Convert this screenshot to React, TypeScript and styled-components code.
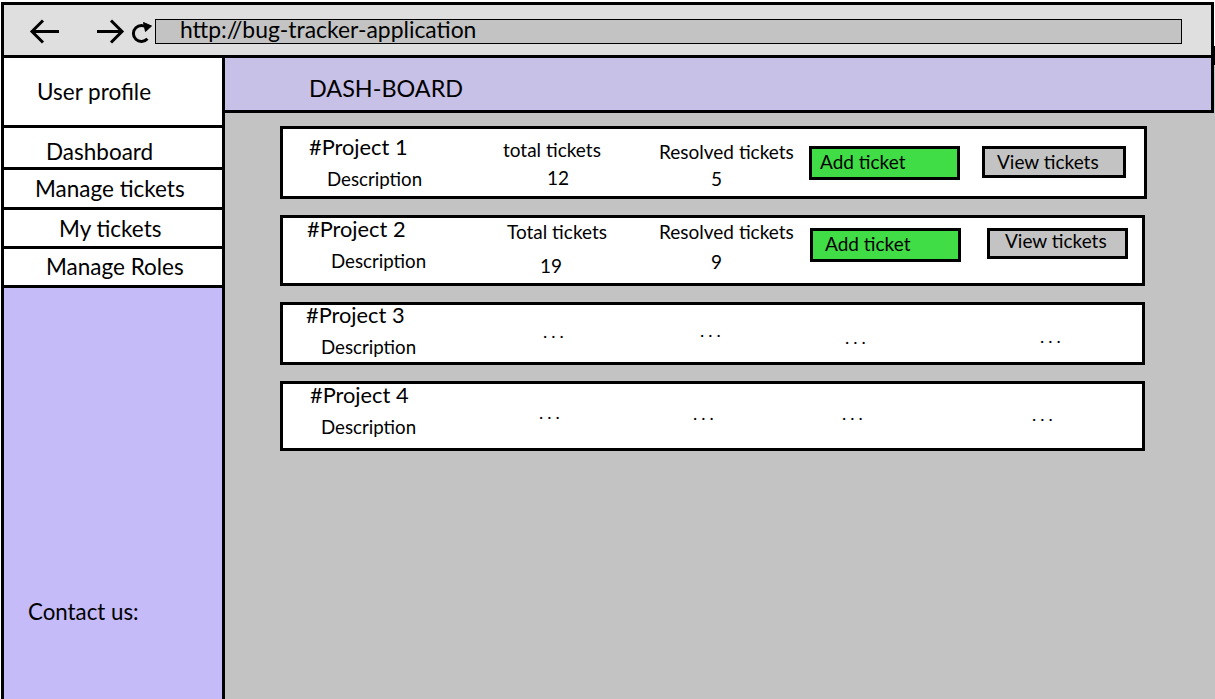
import React from 'react';
import styled, { createGlobalStyle } from 'styled-components';

const GlobalStyle = createGlobalStyle`
  html, body { margin: 0; padding: 0; background: #ffffff; }
  body { font-family: Lato, "Liberation Sans", sans-serif; color: #000; }
  * { box-sizing: border-box; }
`;

const Frame = styled.div`
  position: relative;
  width: 1215px;
  height: 699px;
  padding: 2px 0 0 1px;
  display: flex;
  flex-direction: column;
  overflow: hidden;
  background: #ffffff;
`;

const TopBar = styled.header`
  flex: none;
  width: 1213px;
  height: 56px;
  background: #dfdfdf;
  border: 3px solid #000;
  display: flex;
  align-items: flex-start;
  padding: 14px 0 0 25px;
`;

const NavIcon = styled.svg<{ $ml?: number }>`
  flex: none;
  margin-left: ${(p) => p.$ml ?? 0}px;
  display: block;
`;

const AddressBar = styled.div`
  flex: none;
  width: 1027px;
  height: 25px;
  margin-left: 2px;
  background: #c3c3c3;
  border: 1px solid #000;
  padding-left: 24px;
`;

const AddressText = styled.div`
  margin-top: -1px;
  font-size: 22.9px;
  line-height: 20px;
  white-space: nowrap;
`;

const Notch = styled.div`
  position: absolute;
  left: 1211px;
  top: 46px;
  width: 4px;
  height: 19px;
  background: #000;
`;

const Body = styled.div`
  flex: 1;
  display: flex;
  min-height: 0;
`;

const Sidebar = styled.nav`
  flex: none;
  width: 224px;
  border-left: 3px solid #000;
  border-right: 3px solid #000;
  display: flex;
  flex-direction: column;
`;

const NavItem = styled.div<{ $h: number; $x: number; $dy?: number }>`
  flex: none;
  height: ${(p) => p.$h}px;
  background: #ffffff;
  border-bottom: 3px solid #000;
  display: flex;
  align-items: center;
  padding-left: ${(p) => p.$x}px;
  padding-top: ${(p) => (p.$dy ?? 0) * 2}px;
  font-size: 22.5px;
  line-height: 26px;
  white-space: nowrap;
`;

const ContactBox = styled.div`
  flex: 1;
  background: #c5bbf9;
  padding: 311px 0 0 24px;
  font-size: 22.3px;
  line-height: 26px;
`;

const Main = styled.main`
  flex: 1;
  background: #c3c3c3;
  display: flex;
  flex-direction: column;
`;

const Header = styled.div`
  flex: none;
  height: 55px;
  margin-right: 1px;
  background: #c7c1e7;
  border-right: 3px solid #000;
  border-bottom: 3px solid #000;
  display: flex;
  align-items: center;
  padding: 7px 0 0 84px;
  font-size: 23.4px;
  line-height: 26px;
`;

const ProjectList = styled.section`
  display: flex;
  flex-direction: column;
  gap: 16px;
  padding: 13px 0 0 55px;
`;

const Card = styled.article<{ $h: number; $w: number }>`
  flex: none;
  width: ${(p) => p.$w}px;
  height: ${(p) => p.$h}px;
  background: #ffffff;
  border: 3px solid #000;
  display: flex;
  align-items: flex-start;
`;

const TitleCol = styled.div<{ $top: number }>`
  flex: none;
  width: 206px;
  display: flex;
  flex-direction: column;
  align-items: flex-start;
  margin-top: ${(p) => p.$top}px;
`;

const ProjectTitle = styled.div<{ $x: number }>`
  margin-left: ${(p) => p.$x}px;
  font-size: 21.8px;
  line-height: 22px;
  white-space: nowrap;
`;

const Description = styled.div<{ $x: number }>`
  margin-left: ${(p) => p.$x}px;
  margin-top: 10px;
  font-size: 18.7px;
  line-height: 22px;
  white-space: nowrap;
`;

const StatCol = styled.div<{ $w: number; $top: number }>`
  flex: none;
  width: ${(p) => p.$w}px;
  margin-top: ${(p) => p.$top}px;
  display: flex;
  flex-direction: column;
  align-items: flex-start;
`;

const StatLabel = styled.div<{ $x: number }>`
  margin-left: ${(p) => p.$x}px;
  font-size: 19px;
  line-height: 22px;
  white-space: nowrap;
`;

const StatValue = styled.div<{ $x: number; $gap: number }>`
  margin-left: ${(p) => p.$x}px;
  margin-top: ${(p) => p.$gap}px;
  font-size: 19px;
  line-height: 22px;
`;

const ActionButton = styled.button<{
  $variant: 'add' | 'view';
  $w: number;
  $h: number;
  $ml: number;
  $top: number;
  $px: number;
  $dy: number;
}>`
  flex: none;
  width: ${(p) => p.$w}px;
  height: ${(p) => p.$h}px;
  margin: ${(p) => p.$top}px 0 0 ${(p) => p.$ml}px;
  background: ${(p) => (p.$variant === 'add' ? '#41dd47' : '#c3c3c3')};
  border: 3px solid #000;
  border-radius: 0;
  display: flex;
  align-items: center;
  padding: 0 0 ${(p) => p.$dy}px ${(p) => p.$px}px;
  font-family: Lato, "Liberation Sans", sans-serif;
  font-size: 19px;
  line-height: 22px;
  color: #000;
  white-space: nowrap;
  cursor: pointer;
`;

const DotCell = styled.div<{ $ml: number; $top: number }>`
  flex: none;
  width: 24px;
  margin: ${(p) => p.$top}px 0 0 ${(p) => p.$ml}px;
  font-size: 18px;
  line-height: 20px;
  letter-spacing: 4px;
  white-space: nowrap;
`;

type Stat = { label: string; value: string; w: number; lx: number; vx: number; top: number; gap: number };
type Btn = { w: number; h: number; ml: number; top: number; px: number; dy: number };
type Dot = { ml: number; top: number };

type Project = {
  name: string;
  h: number;
  w: number;
  top: number;
  tx: number;
  dx: number;
  stats?: Stat[];
  add?: Btn;
  view?: Btn;
  dots?: Dot[];
};

const projects: Project[] = [
  {
    name: '#Project 1',
    h: 73,
    w: 867,
    top: 7,
    tx: 26,
    dx: 44,
    stats: [
      { label: 'total tickets', value: '12', w: 170, lx: 14, vx: 58, top: 10, gap: 6 },
      { label: 'Resolved tickets', value: '5', w: 150, lx: 0, vx: 52, top: 12, gap: 5 },
    ],
    add: { w: 151, h: 34, ml: 0, top: 17, px: 8, dy: 3 },
    view: { w: 144, h: 32, ml: 22, top: 17, px: 12, dy: 0 },
  },
  {
    name: '#Project 2',
    h: 71,
    w: 865,
    top: 0,
    tx: 24,
    dx: 48,
    stats: [
      { label: 'Total tickets', value: '19', w: 170, lx: 18, vx: 51, top: 3, gap: 12 },
      { label: 'Resolved tickets', value: '9', w: 150, lx: 0, vx: 52, top: 3, gap: 8 },
    ],
    add: { w: 151, h: 34, ml: 1, top: 10, px: 12, dy: 3 },
    view: { w: 141, h: 31, ml: 26, top: 10, px: 15, dy: 6 },
  },
  {
    name: '#Project 3',
    h: 63,
    w: 865,
    top: -1,
    tx: 23,
    dx: 38,
    dots: [
      { ml: 54, top: 16 },
      { ml: 133, top: 15 },
      { ml: 121, top: 22 },
      { ml: 171, top: 21 },
    ],
  },
  {
    name: '#Project 4',
    h: 70,
    w: 865,
    top: 0,
    tx: 27,
    dx: 38,
    dots: [
      { ml: 50, top: 18 },
      { ml: 130, top: 19 },
      { ml: 125, top: 19 },
      { ml: 166, top: 20 },
    ],
  },
];

const navItems = [
  { label: 'Dashboard', h: 42, x: 42, dy: 4 },
  { label: 'Manage tickets', h: 40, x: 31, dy: 0 },
  { label: 'My tickets', h: 39, x: 55, dy: 1 },
  { label: 'Manage Roles', h: 39, x: 42, dy: 0 },
];

const BackArrow = () => (
  <NavIcon width={30} height={25} viewBox="0 0 30 25" fill="none" stroke="#000" strokeWidth={3}>
    <path d="M30 12.5H3" />
    <path d="M14 1.5L3 12.5L14 23.5" />
  </NavIcon>
);

const ForwardArrow = () => (
  <NavIcon $ml={38} width={28} height={25} viewBox="0 0 28 25" fill="none" stroke="#000" strokeWidth={3}>
    <path d="M0 12.5H25" />
    <path d="M14 1.5L25 12.5L14 23.5" />
  </NavIcon>
);

const ReloadIcon = () => (
  <NavIcon $ml={6} width={22} height={25} viewBox="0 0 22 25" fill="none" stroke="#000">
    <path d="M16.4 9.2 A8 8 0 1 0 16.4 19.8" strokeWidth={3} />
    <path d="M12.5 3.5 L20.5 7 L14.5 12.5 Z" fill="#000" strokeWidth={1} />
  </NavIcon>
);

export default function App() {
  return (
    <>
      <GlobalStyle />
      <Frame>
        <TopBar>
          <BackArrow />
          <ForwardArrow />
          <ReloadIcon />
          <AddressBar>
            <AddressText>http://bug-tracker-application</AddressText>
          </AddressBar>
        </TopBar>
        <Notch />
        <Body>
          <Sidebar>
            <NavItem $h={70} $x={33}>User profile</NavItem>
            {navItems.map((n) => (
              <NavItem key={n.label} $h={n.h} $x={n.x} $dy={n.dy}>
                {n.label}
              </NavItem>
            ))}
            <ContactBox>Contact us:</ContactBox>
          </Sidebar>
          <Main>
            <Header>DASH-BOARD</Header>
            <ProjectList>
              {projects.map((p) => (
                <Card key={p.name} $h={p.h} $w={p.w}>
                  <TitleCol $top={p.top}>
                    <ProjectTitle $x={p.tx}>{p.name}</ProjectTitle>
                    <Description $x={p.dx}>Description</Description>
                  </TitleCol>
                  {p.stats?.map((s) => (
                    <StatCol key={s.label} $w={s.w} $top={s.top}>
                      <StatLabel $x={s.lx}>{s.label}</StatLabel>
                      <StatValue $x={s.vx} $gap={s.gap}>{s.value}</StatValue>
                    </StatCol>
                  ))}
                  {p.add && (
                    <ActionButton $variant="add" $w={p.add.w} $h={p.add.h} $ml={p.add.ml} $top={p.add.top} $px={p.add.px} $dy={p.add.dy}>
                      Add ticket
                    </ActionButton>
                  )}
                  {p.view && (
                    <ActionButton $variant="view" $w={p.view.w} $h={p.view.h} $ml={p.view.ml} $top={p.view.top} $px={p.view.px} $dy={p.view.dy}>
                      View tickets
                    </ActionButton>
                  )}
                  {p.dots?.map((d, i) => (
                    <DotCell key={i} $ml={d.ml} $top={d.top}>...</DotCell>
                  ))}
                </Card>
              ))}
            </ProjectList>
          </Main>
        </Body>
      </Frame>
    </>
  );
}
